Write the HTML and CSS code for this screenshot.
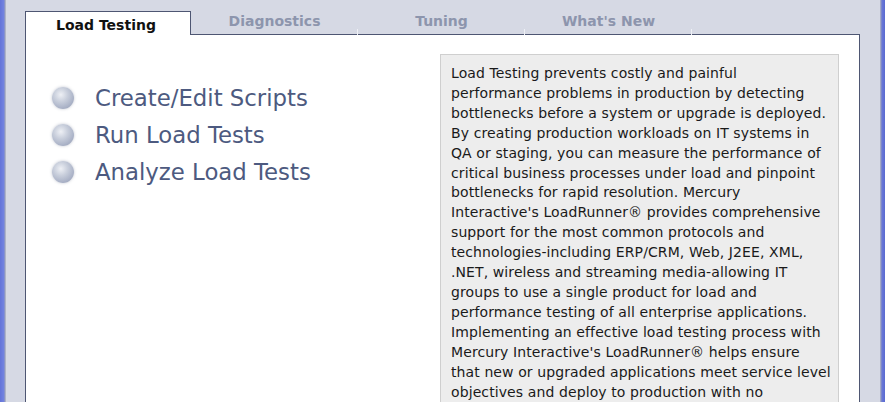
FILE: index.html
```html
<!DOCTYPE html>
<html>
<head>
<meta charset="utf-8">
<link rel="stylesheet" href="styles.css">
</head>
<body>
<div class="window">
  <div class="edge edge-left"></div>
  <div class="main">
    <div class="tabs">
      <div class="tab active">Load Testing</div>
      <div class="tab">Diagnostics</div>
      <div class="tab">Tuning</div>
      <div class="tab">What's New</div>
      <div class="tab filler"></div>
    </div>
    <div class="panel">
      <ul class="menu">
        <li><span class="ball"></span>Create/Edit Scripts</li>
        <li><span class="ball"></span>Run Load Tests</li>
        <li><span class="ball"></span>Analyze Load Tests</li>
      </ul>
      <div class="info">
        <p>Load Testing prevents costly and painful<br>
performance problems in production by detecting<br>
bottlenecks before a system or upgrade is deployed.<br>
By creating production workloads on IT systems in<br>
QA or staging, you can measure the performance of<br>
critical business processes under load and pinpoint<br>
bottlenecks for rapid resolution. Mercury<br>
Interactive's LoadRunner® provides comprehensive<br>
support for the most common protocols and<br>
technologies-including ERP/CRM, Web, J2EE, XML,<br>
.NET, wireless and streaming media-allowing IT<br>
groups to use a single product for load and<br>
performance testing of all enterprise applications.<br>
Implementing an effective load testing process with<br>
Mercury Interactive's LoadRunner® helps ensure<br>
that new or upgraded applications meet service level<br>
objectives and deploy to production with no</p>
      </div>
    </div>
  </div>
  <div class="edge edge-right"></div>
</div>
</body>
</html>
```
FILE: styles.css
```css
html, body {
  margin: 0;
  padding: 0;
  background: #d6d9e4;
}
.window {
  width: 885px;
  height: 402px;
  overflow: hidden;
  display: flex;
  background: #d6d9e4;
  font-family: "DejaVu Sans", Verdana, sans-serif;
}
.edge {
  flex: none;
  height: 100%;
}
.edge-left {
  width: 6px;
  background: linear-gradient(to right, #6474d8 0, #7484e0 4px, #9aa0b8 5px, #c4c8d4 6px);
}
.edge-right {
  width: 5px;
  margin-left: auto;
  background: linear-gradient(to right, #b8bccb 0, #8e96c0 1px, #6a78d8 2px, #5a6ad0 5px);
}
.main {
  flex: none;
  width: 835px;
  margin-left: 19px;
  padding-top: 11px;
}
.tabs {
  display: flex;
  height: 24px;
}
.tab {
  position: relative;
  box-sizing: border-box;
  width: 167px;
  height: 24px;
  border-bottom: 1px solid #4e5672;
  font-size: 14px;
  font-weight: bold;
  color: #8d95ad;
  text-align: center;
  padding-top: 2px;
}
.tab::after {
  content: "";
  position: absolute;
  right: 0;
  bottom: -1px;
  width: 1px;
  height: 6px;
  background: #eef0f5;
}
.tab.active {
  width: 166px;
  background: #fff;
  border: 1px solid #4e5672;
  border-bottom: none;
  color: #111;
  padding-top: 5px;
  padding-right: 4px;
}
.tab.active::after,
.tab.filler::after {
  display: none;
}
.tab.filler {
  flex: 1;
}
.panel {
  box-sizing: border-box;
  height: 380px;
  background: #fff;
  border: 1px solid #4e5672;
  border-top: none;
  display: flex;
  justify-content: space-between;
  padding: 19px 20px 0 0;
  overflow: hidden;
}
.menu {
  list-style: none;
  margin: 25px 0 0 26px;
  padding: 0;
}
.menu li {
  display: flex;
  align-items: center;
  height: 37px;
  font-size: 22.8px;
  color: #4d5a80;
}
.ball {
  flex: none;
  width: 22px;
  height: 22px;
  border-radius: 50%;
  margin-right: 21px;
  background: radial-gradient(circle at 40% 35%, #eef0f5 0, #c9cfdc 35%, #a9b1c6 70%, #8b93aa 100%);
  box-shadow: 0 0 3px rgba(120, 128, 150, 0.45);
}
.info {
  flex: none;
  box-sizing: border-box;
  width: 399px;
  background: #ededed;
  border: 1px solid #cfcfcf;
  padding: 9px 6px 0 10px;
}
.info p {
  margin: 0;
  font-size: 14px;
  letter-spacing: 0.1px;
  line-height: 19.9px;
  color: #1a1a1a;
  white-space: nowrap;
}
```
